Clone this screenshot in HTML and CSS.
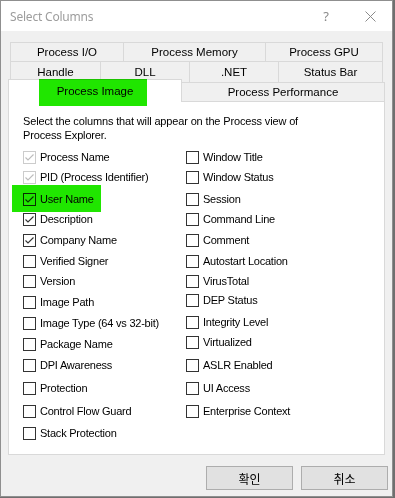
FILE: index.html
```html
<!DOCTYPE html>
<html lang="en">
<head>
    <meta charset="UTF-8">
    <title>Select Columns</title>
    <link rel="stylesheet" href="styles.css">
</head>
<body>
    <div class="window">
        <div class="titlebar">
            <span class="title">Select Columns</span>
            <span class="help">?</span>
            <span class="close">
                <svg width="11" height="11" viewBox="0 0 11 11"><path d="M0.5 0.5 L10.5 10.5 M10.5 0.5 L0.5 10.5" stroke="#8a8a8a" stroke-width="1" fill="none"/></svg>
            </span>
        </div>

        <div class="content">
            <div class="tab-row row1">
                <div class="tab" style="width: 114px">Process I/O</div>
                <div class="tab" style="width: 143px">Process Memory</div>
                <div class="tab" style="width: 118px">Process GPU</div>
            </div>
            <div class="tab-row row2">
                <div class="tab" style="width: 91px">Handle</div>
                <div class="tab" style="width: 90px">DLL</div>
                <div class="tab" style="width: 90px">.NET</div>
                <div class="tab" style="width: 105px">Status Bar</div>
            </div>
            <div class="tab-row row3">
                <div class="tab active" style="width: 174px">Process Image</div>
                <div class="tab" style="width: 204px">Process Performance</div>
            </div>

            <div class="panel">
                <p class="intro">Select the columns that will appear on the Process view of<br>Process Explorer.</p>
                <div class="options">
                    <label class="opt disabled"><span class="box"><svg viewBox="0 0 11 11"><polyline points="1.5,5.5 4,8 9.5,2.5"/></svg></span>Process Name</label>
                    <label class="opt disabled"><span class="box"><svg viewBox="0 0 11 11"><polyline points="1.5,5.5 4,8 9.5,2.5"/></svg></span>PID (Process Identifier)</label>
                    <label class="opt marked"><span class="box"><svg viewBox="0 0 11 11"><polyline points="1.5,5.5 4,8 9.5,2.5"/></svg></span>User Name</label>
                    <label class="opt"><span class="box"><svg viewBox="0 0 11 11"><polyline points="1.5,5.5 4,8 9.5,2.5"/></svg></span>Description</label>
                    <label class="opt"><span class="box"><svg viewBox="0 0 11 11"><polyline points="1.5,5.5 4,8 9.5,2.5"/></svg></span>Company Name</label>
                    <label class="opt"><span class="box"></span>Verified Signer</label>
                    <label class="opt"><span class="box"></span>Version</label>
                    <label class="opt"><span class="box"></span>Image Path</label>
                    <label class="opt"><span class="box"></span>Image Type (64 vs 32-bit)</label>
                    <label class="opt"><span class="box"></span>Package Name</label>
                    <label class="opt"><span class="box"></span>DPI Awareness</label>
                    <label class="opt"><span class="box"></span>Protection</label>
                    <label class="opt"><span class="box"></span>Control Flow Guard</label>
                    <label class="opt"><span class="box"></span>Stack Protection</label>

                    <label class="opt"><span class="box"></span>Window Title</label>
                    <label class="opt"><span class="box"></span>Window Status</label>
                    <label class="opt"><span class="box"></span>Session</label>
                    <label class="opt"><span class="box"></span>Command Line</label>
                    <label class="opt"><span class="box"></span>Comment</label>
                    <label class="opt"><span class="box"></span>Autostart Location</label>
                    <label class="opt"><span class="box"></span>VirusTotal</label>
                    <label class="opt up2"><span class="box"></span>DEP Status</label>
                    <label class="opt up1"><span class="box"></span>Integrity Level</label>
                    <label class="opt up2"><span class="box"></span>Virtualized</label>
                    <label class="opt"><span class="box"></span>ASLR Enabled</label>
                    <label class="opt"><span class="box"></span>UI Access</label>
                    <label class="opt"><span class="box"></span>Enterprise Context</label>
                </div>
            </div>

            <div class="footer">
                <button>확인</button>
                <button>취소</button>
            </div>
        </div>
    </div>
</body>
</html>
```

FILE: styles.css
```css
/* Fenetre */
body {
    margin: 0;
    background: #6f6f6f;
    font-family: "Liberation Sans", Arial, sans-serif;
}

.window {
    width: 393px;
    height: 497px;
    box-sizing: border-box;
    border: 1px solid #8f8f8f;
    background: #f0f0f0;
    display: flex;
    flex-direction: column;
}

.titlebar {
    height: 30px;
    background: #fff;
    display: flex;
    align-items: center;
}

.title {
    flex: 1;
    padding-left: 9px;
    font-family: "Noto Sans", sans-serif;
    font-size: 12px;
    letter-spacing: -0.2px;
    color: #9d9d9d;
}

.help {
    width: 46px;
    text-align: center;
    font-family: "Noto Sans", sans-serif;
    font-size: 13px;
    color: #8a8a8a;
}

.close {
    width: 43px;
    display: flex;
    justify-content: center;
}

.content {
    padding: 11px 0 0 7px;
}

/* Onglets */
.tab-row {
    display: flex;
    margin-left: 2px;
}

.tab {
    box-sizing: border-box;
    border: 1px solid #d9d9d9;
    border-bottom: none;
    margin-left: -1px;
    display: flex;
    align-items: center;
    justify-content: center;
    font-size: 11.5px;
    color: #000;
    background: #f0f0f0;
}

.tab:first-child {
    margin-left: 0;
}

.row1 .tab { height: 19px; }
.row2 .tab { height: 21px; }

.row3 {
    margin-left: 0;
    height: 19px;
    align-items: flex-end;
}

.row3 .tab { height: 19px; }

.row3 .tab.active {
    height: 23px;
    margin-bottom: -1px;
    background: #fff;
    position: relative;
    z-index: 1;
}

.tab.active::after {
    content: "";
    position: absolute;
    left: 30px;
    top: -1px;
    width: 108px;
    height: 27px;
    background: #20e600;
    mix-blend-mode: multiply;
}

/* Panneau */
.panel {
    box-sizing: border-box;
    width: 377px;
    height: 354px;
    border: 1px solid #d9d9d9;
    background: #fff;
    padding: 12px 0 0 14px;
}

.intro {
    margin: 0;
    font-size: 11px;
    line-height: 14px;
    letter-spacing: -0.15px;
}

.options {
    margin-top: 5px;
    display: grid;
    grid-template-columns: 163px 1fr;
    grid-template-rows: 20px 22px 20px 21px 21px 20px 21px 21px 21px 21px 23px 23px 22px 20px;
    grid-auto-flow: column;
}

.opt {
    display: flex;
    align-items: center;
    gap: 4px;
    height: 20px;
    font-size: 11px;
    letter-spacing: -0.22px;
    color: #000;
    position: relative;
}

.opt.up1 { top: -1px; }
.opt.up2 { top: -2px; }

.box {
    box-sizing: border-box;
    width: 13px;
    height: 13px;
    border: 1px solid #333;
    background: #fff;
    display: flex;
}

.box svg {
    width: 11px;
    height: 11px;
    fill: none;
    stroke: #333;
    stroke-width: 1.1;
}

.opt.disabled .box { border-color: #cccccc; }
.opt.disabled .box svg { stroke: #bcbcbc; }

.opt.marked::after {
    content: "";
    position: absolute;
    left: -11px;
    top: -4px;
    width: 89px;
    height: 27px;
    background: #20e600;
    mix-blend-mode: multiply;
}

/* Boutons */
.footer {
    display: flex;
    justify-content: flex-end;
    gap: 8px;
    margin-top: 11px;
    padding-right: 4px;
}

.footer button {
    width: 87px;
    height: 24px;
    background: #e1e1e1;
    border: 1px solid #adadad;
    font-family: "Noto Sans CJK KR", sans-serif;
    font-size: 12px;
    color: #000;
    padding: 0;
}
```
